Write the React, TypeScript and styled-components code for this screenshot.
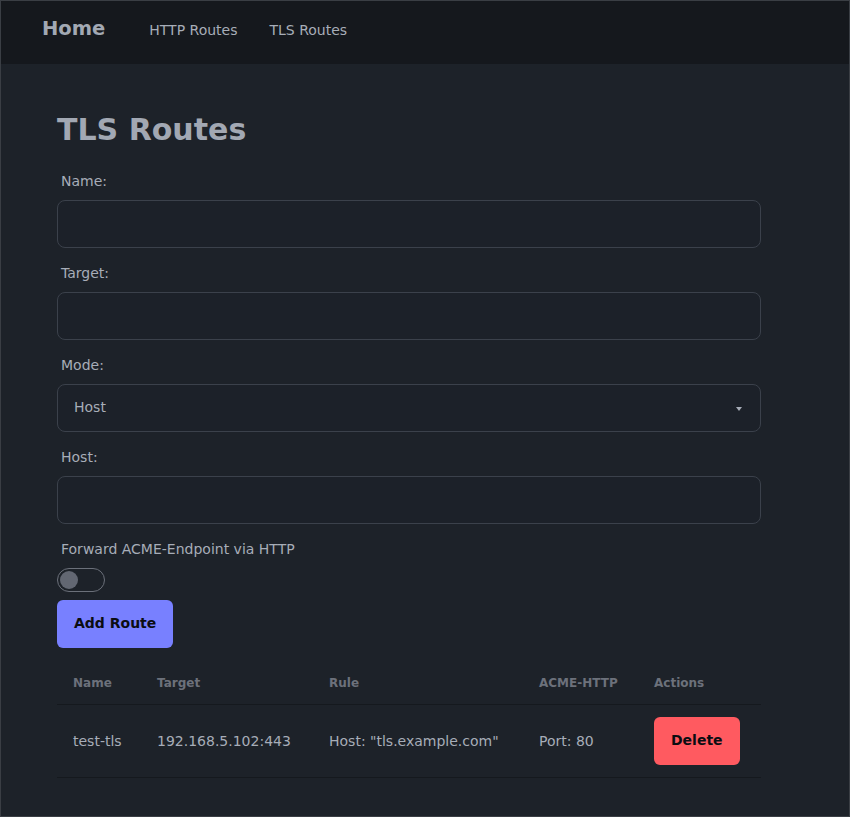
import React, { useState } from "react";
import styled, { createGlobalStyle } from "styled-components";

const GlobalStyle = createGlobalStyle`
  html, body {
    margin: 0;
    padding: 0;
    background: #1c2129;
  }
  body {
    font-family: "DejaVu Sans", "Liberation Sans", sans-serif;
    color: #a7adb8;
  }
  * { box-sizing: border-box; }
`;

const Page = styled.div`
  min-height: 817px;
  border: 1px solid #3a3e44;
  background: #1d2229;
`;

const Nav = styled.nav`
  height: 63px;
  background: #15181d;
  display: flex;
  align-items: center;
  padding: 0 0 0 41px;
`;

const Brand = styled.a`
  font-size: 19.5px;
  font-weight: bold;
  color: #a2a8b3;
  margin-right: 44px;
  margin-top: -9px;
`;

const NavLink = styled.a`
  font-size: 14px;
  color: #a7adb8;
  margin-right: 32px;
  margin-top: -6px;
`;

const Main = styled.main`
  width: 704px;
  margin-left: 56px;
  padding-top: 48px;
  padding-bottom: 38px;
`;

const Title = styled.h1`
  font-size: 30px;
  font-weight: bold;
  color: #a2a8b3;
  margin: 0 0 25px;
  line-height: 36px;
`;

const Label = styled.label`
  display: block;
  font-size: 14px;
  color: #a7adb8;
  padding-left: 4px;
  margin-bottom: 10px;
  line-height: 17px;
`;

const Input = styled.input`
  display: block;
  width: 100%;
  height: 48px;
  border: 1px solid #3b414b;
  border-radius: 8px;
  background: #1c2129;
  margin-bottom: 17px;
  color: #a7adb8;
  font: inherit;
  font-size: 14px;
  padding: 0 16px;
  outline: none;
`;

const SelectWrap = styled.div`
  position: relative;
  margin-bottom: 17px;
`;

const Select = styled.div`
  height: 48px;
  border: 1px solid #3b414b;
  border-radius: 8px;
  background: #1c2129;
  display: flex;
  align-items: center;
  padding: 0 16px 2px;
  font-size: 14px;
  color: #a7adb8;
  justify-content: space-between;
`;

const Caret = styled.span`
  width: 0;
  height: 0;
  border-left: 3px solid transparent;
  border-right: 3px solid transparent;
  border-top: 4px solid #a7adb8;
  margin-right: 2px;
  margin-top: 4px;
`;

const Switch = styled.button<{ $on: boolean }>`
  display: block;
  width: 48px;
  height: 24px;
  border-radius: 12px;
  border: 1px solid #6b707a;
  background: ${(p) => (p.$on ? "#7a80ff" : "transparent")};
  padding: 0;
  position: relative;
  margin-bottom: 8px;
  cursor: pointer;

  &::after {
    content: "";
    position: absolute;
    top: 2px;
    left: ${(p) => (p.$on ? "25px" : "2px")};
    width: 18px;
    height: 18px;
    border-radius: 50%;
    background: #626772;
  }
`;

const Button = styled.button<{ $danger?: boolean }>`
  height: 48px;
  padding: 0 17px 2px;
  border: none;
  border-radius: 6px;
  background: ${(p) => (p.$danger ? "#ff5a60" : "#7880ff")};
  color: #0b0d12;
  font: inherit;
  font-size: 14px;
  font-weight: bold;
  cursor: pointer;
`;

const Table = styled.table`
  width: 100%;
  border-collapse: collapse;
  margin-top: 13px;
`;

const Th = styled.th<{ $w: number }>`
  width: ${(p) => p.$w}px;
  text-align: left;
  font-size: 12px;
  font-weight: bold;
  color: #6c717b;
  padding: 15px 0 14px 16px;
  border-bottom: 1px solid #15191e;
`;

const Td = styled.td`
  font-size: 14px;
  color: #a7adb8;
  padding: 12px 0 12px 16px;
  border-bottom: 1px solid #15191e;
  height: 72px;
`;

const routes = [
  { name: "test-tls", target: "192.168.5.102:443", rule: 'Host: "tls.example.com"', acme: "Port: 80" },
];

const App: React.FC = () => {
  const [acme, setAcme] = useState(false);
  return (
    <Page>
      <GlobalStyle />
      <Nav>
        <Brand>Home</Brand>
        <NavLink>HTTP Routes</NavLink>
        <NavLink>TLS Routes</NavLink>
      </Nav>
      <Main>
        <Title>TLS Routes</Title>
        <Label>Name:</Label>
        <Input />
        <Label>Target:</Label>
        <Input />
        <Label>Mode:</Label>
        <SelectWrap>
          <Select>
            Host
            <Caret />
          </Select>
        </SelectWrap>
        <Label>Host:</Label>
        <Input />
        <Label>Forward ACME-Endpoint via HTTP</Label>
        <Switch $on={acme} onClick={() => setAcme(!acme)} />
        <Button>Add Route</Button>
        <Table>
          <thead>
            <tr>
              <Th $w={84}>Name</Th>
              <Th $w={172}>Target</Th>
              <Th $w={210}>Rule</Th>
              <Th $w={115}>ACME-HTTP</Th>
              <Th $w={123}>Actions</Th>
            </tr>
          </thead>
          <tbody>
            {routes.map((r) => (
              <tr key={r.name}>
                <Td>{r.name}</Td>
                <Td>{r.target}</Td>
                <Td>{r.rule}</Td>
                <Td>{r.acme}</Td>
                <Td>
                  <Button $danger>Delete</Button>
                </Td>
              </tr>
            ))}
          </tbody>
        </Table>
      </Main>
    </Page>
  );
};

export default App;
